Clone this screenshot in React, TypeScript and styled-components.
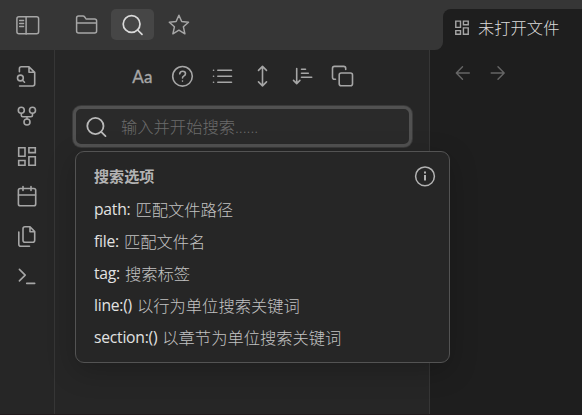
import React from "react";
import styled, { createGlobalStyle } from "styled-components";

const Global = createGlobalStyle`
  * { box-sizing: border-box; }
  body { margin: 0; background: #1e1e1e; font-family: "Open Sans", "Noto Sans CJK SC", sans-serif; }
`;

const Window = styled.div`
  width: 582px;
  height: 415px;
  display: flex;
  flex-direction: column;
  overflow: hidden;
  background: #1e1e1e;
  border-bottom: 1px solid #211a1c;
  color: #b3b3b3;
`;
const Header = styled.header`
  height: 50px;
  flex: none;
  display: flex;
`;
const HeaderTools = styled.div`
  width: 443px;
  display: flex;
  align-items: flex-start;
  padding: 9px 0 0 6px;
  background: #363636;
  border-bottom-right-radius: 8px;
`;
const HeaderButton = styled.button<{ $active?: boolean; $gap?: number }>`
  width: 43px;
  height: 31px;
  margin: 0 3px 0 ${(p) => p.$gap ?? 0}px;
  padding: 0;
  border: 0;
  border-radius: 5px;
  display: flex;
  align-items: center;
  justify-content: center;
  background: ${(p) => (p.$active ? "#464646" : "transparent")};
  color: ${(p) => (p.$active ? "#dadada" : "#a6a6a6")};
`;
const TabStrip = styled.div`
  flex: 1;
  padding-top: 9px;
  background: #363636;
`;
const Tab = styled.div`
  height: 41px;
  display: flex;
  align-items: center;
  gap: 7px;
  padding: 0 0 3px 10px;
  border-top-left-radius: 8px;
  background: #1e1e1e;
  color: #a6a6a6;
`;
const TabTitle = styled.span`
  font-size: 16.3px;
  font-weight: 300;
  line-height: 22px;
  color: #dadada;
`;
const Body = styled.div`
  flex: 1;
  display: flex;
`;
const Ribbon = styled.nav`
  width: 55px;
  padding-top: 15px;
  display: flex;
  flex-direction: column;
  align-items: center;
  gap: 16px;
  background: #262626;
  border-right: 1px solid #363636;
  color: #a6a6a6;
`;
const SearchPane = styled.aside`
  width: 375px;
  padding: 14px 17px 0 18px;
  background: #262626;
  border-right: 1px solid #363636;
`;
const Toolbar = styled.div`
  display: flex;
  justify-content: center;
  gap: 16px;
  color: #a6a6a6;
`;
const SearchAnchor = styled.div`
  position: relative;
  margin-top: 18px;
`;
const SearchBox = styled.label`
  height: 41px;
  display: flex;
  align-items: center;
  padding-left: 9px;
  gap: 12px;
  border: 3px solid #515151;
  border-radius: 8px;
  background: #2a2a2a;
  color: #bababa;
  box-shadow: 0 0 0 1px #3a3a3a;
`;
const SearchInput = styled.input`
  flex: 1;
  min-width: 0;
  height: 28px;
  padding: 0;
  border: 0;
  outline: 0;
  background: transparent;
  font: 300 16.3px "Open Sans", "Noto Sans CJK SC", sans-serif;
  color: #dadada;
  &::placeholder { color: #6c6c6c; opacity: 1; }
`;
const Suggestions = styled.section`
  position: absolute;
  z-index: 2;
  left: 2px;
  top: 45px;
  width: 375px;
  height: 212px;
  padding: 8px 12px 0 18px;
  background: #262626;
  border: 1px solid #535353;
  border-radius: 9px;
  box-shadow: 0 8px 28px rgba(0, 0, 0, 0.22);
`;
const SuggestionHeader = styled.div`
  height: 32px;
  margin-bottom: 0.6px;
  display: flex;
  justify-content: space-between;
  align-items: center;
`;
const Title = styled.h2`
  margin: 0;
  font-size: 15.1px;
  font-weight: 700;
  line-height: 22px;
  color: #b3b3b3;
`;
const Option = styled.div`
  height: 32.2px;
  display: flex;
  align-items: center;
  gap: 5px;
  font-size: 16.3px;
  white-space: nowrap;
`;
const Keyword = styled.span`
  font-size: 15.7px;
  letter-spacing: -0.25px;
  color: #e2e2e2;
`;
const Description = styled.span`
  font-weight: 300;
  color: #c2c2c2;
`;
const Navigation = styled.div`
  flex: 1;
  display: flex;
  gap: 11px;
  padding: 11px 0 0 21px;
  color: #666;
`;
const Svg = styled.svg`
  display: block;
  flex: none;
  fill: none;
  stroke: currentColor;
  stroke-linecap: round;
  stroke-linejoin: round;
`;
const LetterCase = styled.span`
  width: 24px;
  height: 24px;
  text-align: center;
  font: 400 17px/26px Lato, sans-serif;
  letter-spacing: 0.2px;
  -webkit-text-stroke: 0.35px currentColor;
`;

function Icon({ children, size = 24, stroke = 1.6, shift = 0 }: { children: React.ReactNode; size?: number; stroke?: number; shift?: number }) {
  return <Svg width={size} height={size} viewBox={`${shift} 0 24 24`} strokeWidth={stroke}>{children}</Svg>;
}

const Dashboard = ({ size, stroke }: { size?: number; stroke?: number }) => (
  <Icon size={size} stroke={stroke}>
    <path strokeLinejoin="miter" d="M3.7 2.8H10v8.4H3.7zM13.9 2.8h6.4v4.8h-6.4zM13.9 11.8h6.4v8.5h-6.4zM3.7 15.5H10v4.8H3.7z" />
  </Icon>
);

const options = [
  ["path:", "匹配文件路径"],
  ["file:", "匹配文件名"],
  ["tag:", "搜索标签"],
  ["line:()", "以行为单位搜索关键词"],
  ["section:()", "以章节为单位搜索关键词"],
];

export default function App() {
  return (
    <Window>
      <Global />
      <Header>
        <HeaderTools>
          <HeaderButton aria-label="Toggle sidebar">
            <Icon stroke={1.5} shift={0.4}><rect x="1.3" y="3.8" width="21.7" height="17" rx="2" /><path d="M10.5 4v17" /><path strokeWidth="1.3" d="M4 7.5h4M4 10.5h4M4 13.5h4" /></Icon>
          </HeaderButton>
          <HeaderButton aria-label="Files" $gap={13}>
            <Icon stroke={1.5} shift={0.4}><path d="M2 18V5Q2 3 4 3h4.4q1 0 1.7 1l1 1.4q.5.6 1.3.6H20q2 0 2 2v10q0 2-2 2H4q-2 0-2-2ZM2 10h20" /></Icon>
          </HeaderButton>
          <HeaderButton aria-label="Search" $active>
            <Icon stroke={1.7} shift={0.4}><circle cx="11" cy="11" r="8.4" /><path d="m17 17 4.4 4.4" /></Icon>
          </HeaderButton>
          <HeaderButton aria-label="Bookmarks">
            <Icon stroke={1.5} shift={0.4}><path d="m12.3 2.2 2.8 6.3 6.8.7-5.1 4.6 1.5 7-6-3.6-6 3.6 1.5-7-5.1-4.6 6.8-.7z" /></Icon>
          </HeaderButton>
        </HeaderTools>
        <TabStrip>
          <Tab><Dashboard size={18} stroke={1.9} /><TabTitle>未打开文件</TabTitle></Tab>
        </TabStrip>
      </Header>
      <Body>
        <Ribbon>
          <Icon><path d="M4.4 6.8V3.7q0-1.9 1.9-1.9H14l5.7 5.5v11.8q0 1.9-1.9 1.9H4.6M14 2v5.3h5.5" /><circle cx="5.4" cy="13" r="2.9" /><path d="m7.5 15.2 2 2" /></Icon>
          <Icon><circle cx="6.3" cy="5.3" r="3" /><circle cx="17.5" cy="5.3" r="3" /><circle cx="12" cy="17" r="3" /><path d="M6.3 8.5v1.7q0 1.5 1.5 1.5H16q1.5 0 1.5-1.5V8.5M12 11.8V14" /></Icon>
          <Dashboard />
          <Icon><rect x="3.4" y="3.5" width="17.3" height="17.3" rx="1.8" /><path d="M3.5 10h17M8 1.5v4M16 1.5v4" /></Icon>
          <Icon><path d="M15 1.8h-5q-2 0-2 2v11.5q0 2 2 2h7.7q2 0 2-2V6.6ZM15 2v4.7h4.6M3.8 7v12.3q0 2 2 2H14.5" /></Icon>
          <Icon><path d="m4.4 4.4 5.8 5.7-5.8 5.8M11.7 18.4h8" /></Icon>
        </Ribbon>
        <SearchPane>
          <Toolbar>
            <LetterCase>Aa</LetterCase>
            <Icon shift={0.5}><circle cx="12" cy="12.3" r="9.8" /><path d="M9.2 9.8q.5-2.5 2.9-2.5 2.9 0 2.9 2.5 0 1.3-1.8 2.3-1.2.7-1.2 1.9M12 17v.1" /></Icon>
            <Icon shift={0.5}><path d="M7.3 6.3H21M7.3 12.3H21M7.3 18.3H21M3 6.3h.1M3 12.3h.1M3 18.3h.1" /></Icon>
            <Icon shift={0.5}><path d="M12 2.5v19.4M8 6.4l4-4 4 4M8 17.9l4 4 4-4" /></Icon>
            <Icon shift={0.5}><path d="M6.2 4.5v15M3 16.4l3.2 3.2 3.2-3.2M11 5.3h4M11 9.3h6.8M11 13.3h10.2" /></Icon>
            <Icon shift={0.5}><rect x="8.7" y="9" width="13.3" height="12.8" rx="2" /><path d="M5 15.3H4q-2 0-2-2V4.4q0-2 2-2h9.2q2 0 2 2v1" /></Icon>
          </Toolbar>
          <SearchAnchor>
            <SearchBox>
              <Icon stroke={1.8} shift={0.3}><circle cx="10.7" cy="11" r="8.1" /><path d="m16.5 16.8 4.3 4.3" /></Icon>
              <SearchInput placeholder="输入并开始搜索......" />
            </SearchBox>
            <Suggestions>
              <SuggestionHeader>
                <Title>搜索选项</Title>
                <Icon stroke={1.5}><circle cx="12" cy="12.3" r="9.4" /><path strokeLinecap="butt" strokeWidth="2" d="M12 11v5.5M12 7.5v2" /></Icon>
              </SuggestionHeader>
              {options.map(([key, text]) => (
                <Option key={key}><Keyword>{key}</Keyword><Description>{text}</Description></Option>
              ))}
            </Suggestions>
          </SearchAnchor>
        </SearchPane>
        <Navigation>
          <Icon stroke={1.4}><path d="M18.3 12H5.5M11.5 5.7 5.3 12l6.2 6.3" /></Icon>
          <Icon stroke={1.4}><path d="M5.2 12H18M12 5.7l6.2 6.3-6.2 6.3" /></Icon>
        </Navigation>
      </Body>
    </Window>
  );
}
